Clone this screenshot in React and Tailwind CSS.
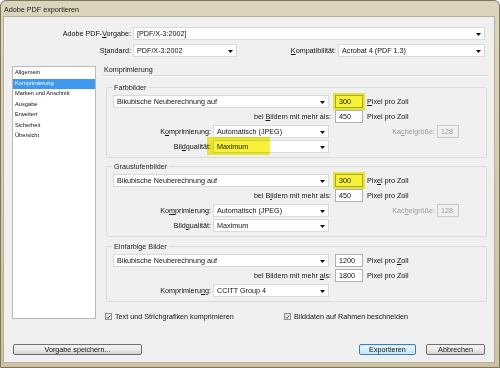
import React from "react";

function U({ children }) {
  return <span className="underline decoration-[0.6px] underline-offset-[1px]">{children}</span>;
}

function Arrow() {
  return (
    <svg className="absolute right-[3px] top-[5px]" width="5" height="3" viewBox="0 0 5 3">
      <path d="M0 0H5L2.5 3Z" fill="#111" />
    </svg>
  );
}

function Combo({ w, children }) {
  return (
    <div className={`relative flex h-[13px] items-center border border-[#dadada] bg-white pl-[3px] leading-none ${w}`}>
      <span>{children}</span>
      <Arrow />
    </div>
  );
}

function Field({ children, hl, disabled }) {
  return (
    <div
      className={`relative ml-[4px] flex h-[13px] items-center border pl-[3px] leading-none ${
        disabled ? "w-[22px] border-[#c9c9c9] bg-[#f0f0f0] text-[#9a9a9a]" : "w-[28px] border-[#aeb0b6] bg-white"
      }`}
    >
      <span>{children}</span>
      {hl && <div className="absolute -inset-[3px] bg-[#f6f23a] mix-blend-multiply" />}
    </div>
  );
}

function Group({ title, children }) {
  return (
    <div className="relative ml-[4px] w-[381px] rounded-[3px] border border-[#d9dcdf] pb-[4px] pl-[6px] pt-[7px]">
      <span className="absolute -top-[5px] left-[5px] bg-[#f0f0f0] px-[2px] leading-[9px] text-[#222]">{title}</span>
      <div className="flex flex-col gap-[2px]">{children}</div>
    </div>
  );
}

function Row({ children }) {
  return <div className="relative flex h-[13px] items-center leading-none">{children}</div>;
}

function Check({ children }) {
  return (
    <div className="flex items-center">
      <div className="flex h-[7px] w-[7px] items-center justify-center border border-[#8e8f8f] bg-gradient-to-br from-[#dcdcdc] to-[#ffffff]">
        <svg width="6" height="6" viewBox="0 0 6 6">
          <path d="M1 3.2L2.4 4.6L5 1.2" fill="none" stroke="#2e3f76" strokeWidth="1.1" />
        </svg>
      </div>
      <span className="ml-[3px] leading-none">{children}</span>
    </div>
  );
}

function Btn({ w, primary, children }) {
  return (
    <div
      className={`flex h-[11px] items-center justify-center rounded-[2px] border leading-none ${w} ${
        primary
          ? "border-[#3c7fb1] bg-gradient-to-b from-[#eaf6fd] via-[#d9f0fc] to-[#b4e0f7] shadow-[inset_0_0_0_1px_#d2eefc]"
          : "border-[#707070] bg-gradient-to-b from-[#f4f4f4] via-[#ebebeb] to-[#d2d2d2]"
      }`}
    >
      {children}
    </div>
  );
}

export default function App() {
  const side = ["Allgemein", "Komprimierung", "Marken und Anschnitt", "Ausgabe", "Erweitert", "Sicherheit", "Übersicht"];
  return (
    <div className="relative h-[368px] w-[500px] overflow-hidden rounded-t-[6px] border border-[#7b7666] bg-gradient-to-b from-[#ddd4bd] via-[#d6cbae] to-[#cfc2a1] font-['Liberation_Sans',Arial,sans-serif] text-[7.2px] text-[#111] [will-change:transform]">
      <div className="flex h-[16px] items-center pl-[3px] pt-[3px] text-[7.2px] text-[#1a1a1a]">Adobe PDF exportieren</div>
      <div className="ml-[3px] flex h-[345px] w-[490px] flex-col bg-[#f0f0f0] pt-[10px] shadow-[0_0_0_1px_#b8af98]">
        {/* top rows */}
        <div className="flex h-[13px] items-center leading-none">
          <div className="w-[127px] text-right">
            Adobe PDF-<U>V</U>orgabe:
          </div>
          <div className="ml-[2px]">
            <Combo w="w-[352px]">[PDF/X-3:2002]</Combo>
          </div>
        </div>
        <div className="mt-[4px] flex h-[13px] items-center leading-none">
          <div className="w-[127px] text-right">
            S<U>t</U>andard:
          </div>
          <div className="ml-[2px]">
            <Combo w="w-[104px]">PDF/X-3:2002</Combo>
          </div>
          <div className="w-[99px] text-right">
            <U>K</U>ompatibilität:
          </div>
          <div className="ml-[2px]">
            <Combo w="w-[147px]">Acrobat 4 (PDF 1.3)</Combo>
          </div>
        </div>

        {/* main */}
        <div className="mt-[7px] flex items-start">
          <div className="ml-[8px] mt-[2px] flex h-[253px] w-[84px] flex-col border border-[#b9b9b9] bg-white pt-[1px] text-[5.7px]">
            {side.map((s, i) => (
              <div
                key={s}
                className={`flex h-[10.5px] items-center pl-[2px] leading-none ${i === 1 ? "bg-[#3d98ee] text-white" : ""}`}
              >
                {s}
              </div>
            ))}
          </div>

          <div className="ml-[6px] flex w-[386px] flex-col">
            <div className="h-[12px] border-b border-[#d6d6d6] pl-[2px] leading-[11px] shadow-[0_1px_0_#ffffff]">Komprimierung</div>

            <div className="mt-[11px]">
              <Group title="Farbbilder">
                <Row>
                  <Combo w="w-[216px]">Bikubische Neuberechnung auf</Combo>
                  <div className="ml-[2px]">
                    <Field hl>300</Field>
                  </div>
                  <span className="ml-[4px]">
                    <U>P</U>ixel pro Zoll
                  </span>
                </Row>
                <Row>
                  <div className="w-[218px] text-right">
                    bei <U>B</U>ildern mit mehr als:
                  </div>
                  <Field>450</Field>
                  <span className="ml-[4px]">Pixel pro Zoll</span>
                </Row>
                <Row>
                  <div className="w-[98px] text-right">
                    K<U>o</U>mprimierung:
                  </div>
                  <div className="ml-[2px]">
                    <Combo w="w-[116px]">Automatisch (JPEG)</Combo>
                  </div>
                  <div className="w-[106px] text-right text-[#9a9a9a]">
                    Ka<U>c</U>helgröße:
                  </div>
                  <div className="ml-[-2px]">
                    <Field disabled>128</Field>
                  </div>
                </Row>
                <Row>
                  <div className="w-[98px] text-right">
                    Bil<U>d</U>qualität:
                  </div>
                  <div className="ml-[2px]">
                    <Combo w="w-[116px]">Maximum</Combo>
                  </div>
                  <div className="absolute left-[94px] top-[-3px] h-[18px] w-[63px] bg-[#f6f23a] mix-blend-multiply" />
                </Row>
              </Group>
            </div>

            <div className="mt-[8px]">
              <Group title="Graustufenbilder">
                <Row>
                  <Combo w="w-[216px]">Bikubische Neuberechnung auf</Combo>
                  <div className="ml-[2px]">
                    <Field hl>300</Field>
                  </div>
                  <span className="ml-[4px]">
                    Pix<U>e</U>l pro Zoll
                  </span>
                </Row>
                <Row>
                  <div className="w-[218px] text-right">
                    bei B<U>i</U>ldern mit mehr als:
                  </div>
                  <Field>450</Field>
                  <span className="ml-[4px]">Pixel pro Zoll</span>
                </Row>
                <Row>
                  <div className="w-[98px] text-right">
                    Ko<U>m</U>primierung:
                  </div>
                  <div className="ml-[2px]">
                    <Combo w="w-[116px]">Automatisch (JPEG)</Combo>
                  </div>
                  <div className="w-[106px] text-right text-[#9a9a9a]">
                    Kac<U>h</U>elgröße:
                  </div>
                  <div className="ml-[-2px]">
                    <Field disabled>128</Field>
                  </div>
                </Row>
                <Row>
                  <div className="w-[98px] text-right">
                    Bild<U>q</U>ualität:
                  </div>
                  <div className="ml-[2px]">
                    <Combo w="w-[116px]">Maximum</Combo>
                  </div>
                </Row>
              </Group>
            </div>

            <div className="mt-[9px]">
              <Group title="Einfarbige Bilder">
                <Row>
                  <Combo w="w-[216px]">Bikubische Neuberechnung auf</Combo>
                  <div className="ml-[2px]">
                    <Field>1200</Field>
                  </div>
                  <span className="ml-[4px]">
                    Pixel pro <U>Z</U>oll
                  </span>
                </Row>
                <Row>
                  <div className="w-[218px] text-right">
                    bei Bildern mit mehr <U>a</U>ls:
                  </div>
                  <Field>1800</Field>
                  <span className="ml-[4px]">Pixel pro Zoll</span>
                </Row>
                <Row>
                  <div className="w-[98px] text-right">
                    Komprimieru<U>n</U>g:
                  </div>
                  <div className="ml-[2px]">
                    <Combo w="w-[116px]">CCITT Group 4</Combo>
                  </div>
                </Row>
              </Group>
            </div>

            <div className="mt-[10px] flex h-[10px] items-center pl-[3px]">
              <div className="w-[179px]">
                <Check>Text und Strichgrafiken komprimieren</Check>
              </div>
              <Check>Bilddaten auf Rahmen beschneiden</Check>
            </div>
          </div>
        </div>

        {/* buttons */}
        <div className="mt-[22px] flex items-center justify-between pl-[9px] pr-[9px]">
          <Btn w="w-[129px]">Vorgabe speichern...</Btn>
          <div className="flex gap-[10px]">
            <Btn w="w-[57px]" primary>
              Exportieren
            </Btn>
            <Btn w="w-[59px]">Abbrechen</Btn>
          </div>
        </div>
      </div>
    </div>
  );
}
